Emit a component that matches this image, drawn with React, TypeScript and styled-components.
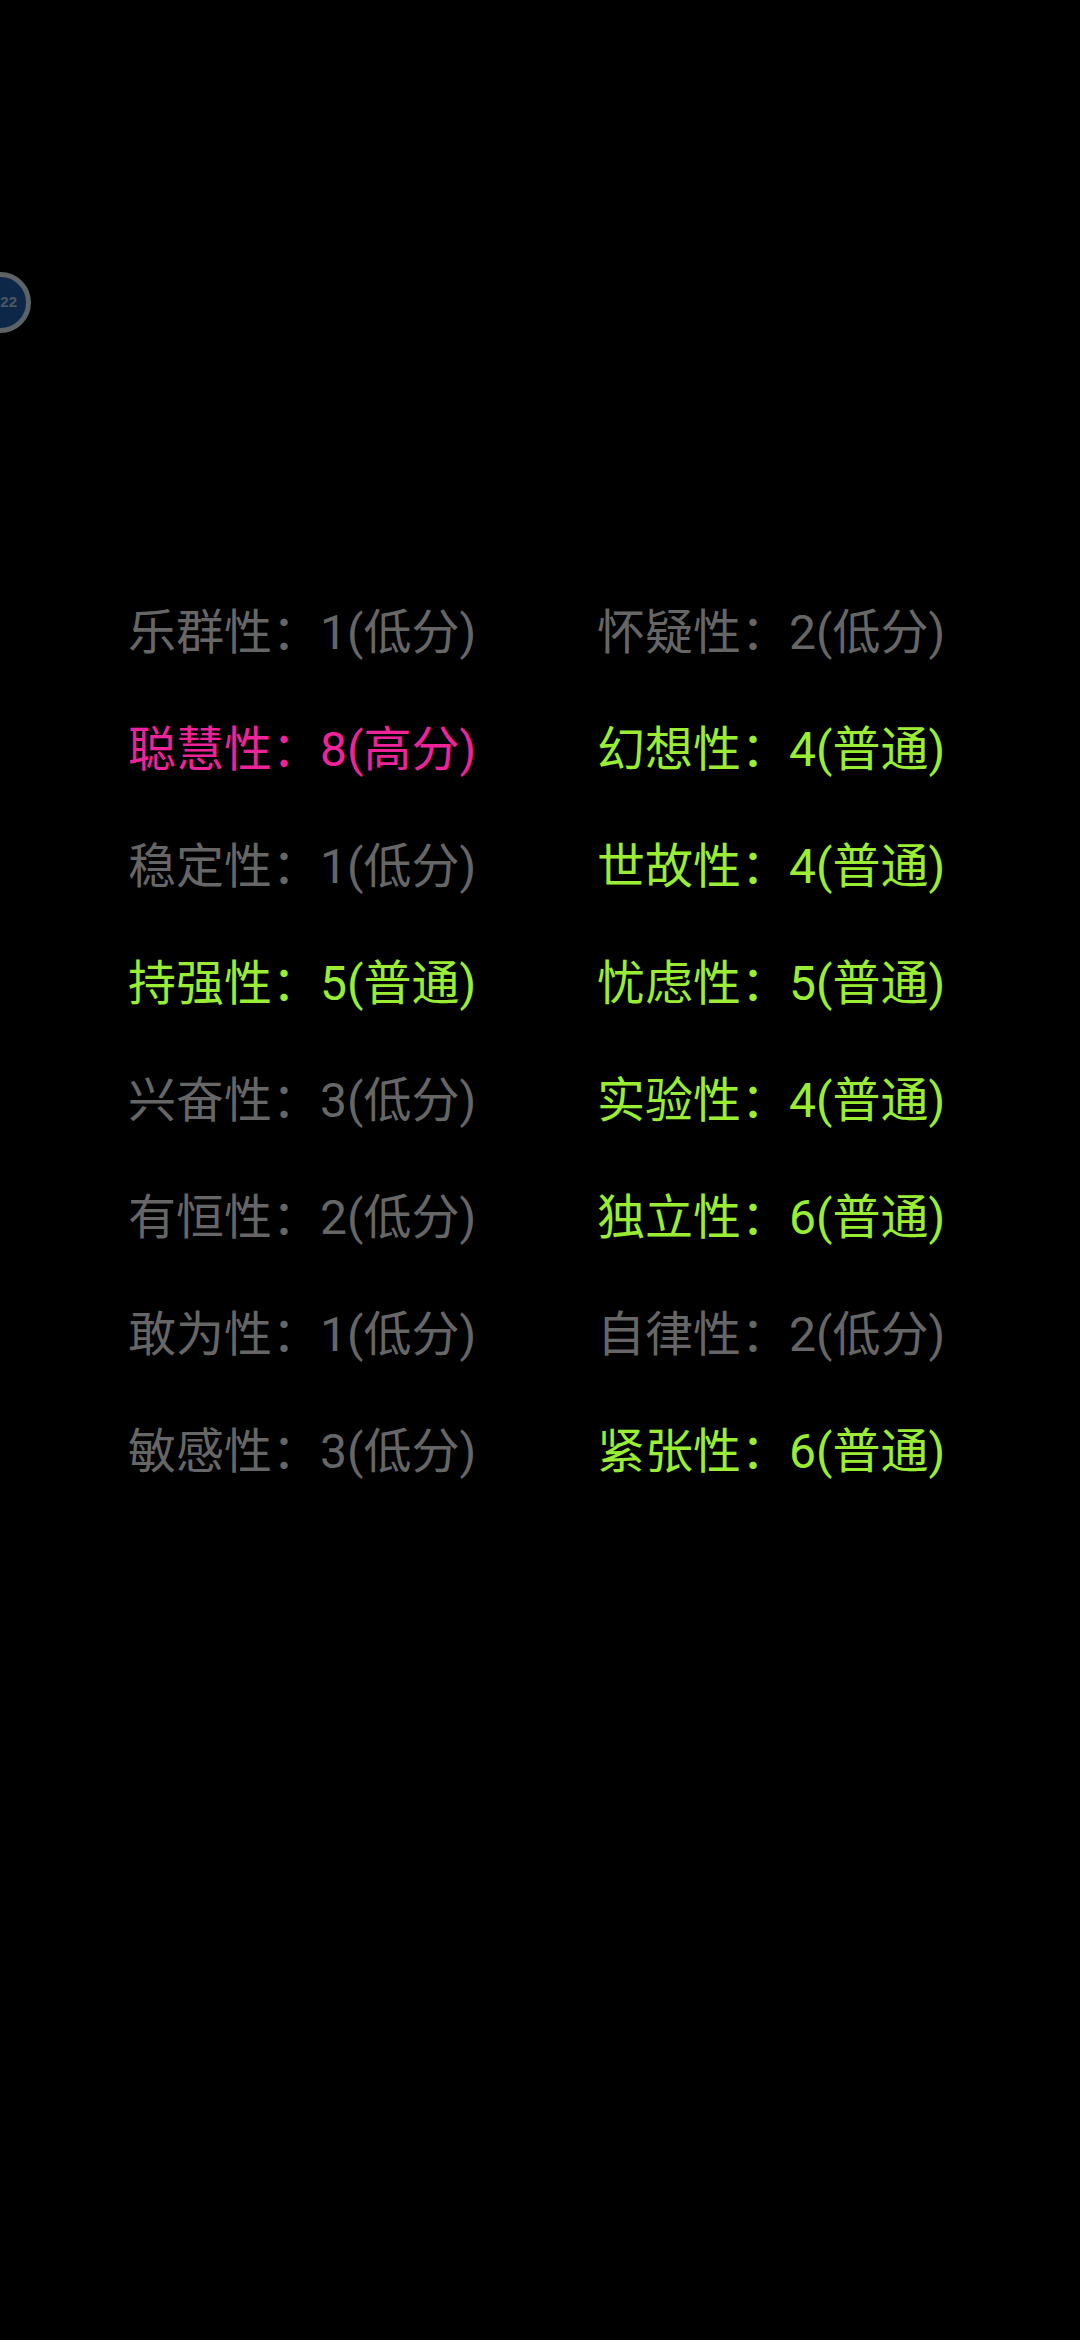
import * as React from 'react';
import styled, { createGlobalStyle } from 'styled-components';

type Level = 'low' | 'normal' | 'high';

const colors: Record<Level, string> = {
  low: '#666666',
  normal: '#99ee33',
  high: '#ee2299',
};

const GlobalStyle = createGlobalStyle`
  html, body {
    margin: 0;
    padding: 0;
    background: #000;
  }
`;

const Screen = styled.div`
  position: relative;
  width: 1080px;
  height: 2340px;
  background: #000;
  overflow: hidden;
  padding: 569px 0 0 128px;
  box-sizing: border-box;
`;

const Bubble = styled.div`
  position: absolute;
  left: -30px;
  top: 272px;
  width: 61px;
  height: 61px;
  box-sizing: border-box;
  border: 5px solid #5c6266;
  border-radius: 50%;
  background: #0c2748;
  display: flex;
  align-items: center;
  justify-content: flex-end;
  padding: 0 9px 2px 0;
  color: #4c5763;
  font: bold 15px 'Liberation Sans', sans-serif;
`;

const Grid = styled.div`
  display: grid;
  grid-template-columns: 469px 1fr;
  grid-auto-rows: 117px;
`;

const Item = styled.div<{ $level: Level }>`
  display: flex;
  align-items: center;
  height: 117px;
  white-space: nowrap;
  font-family: Roboto, 'Noto Sans CJK SC', sans-serif;
  font-size: 48px;
  color: ${(p) => colors[p.$level]};
`;

const COLON = '\uFF1A';

const items: [string, string, Level][] = [
  ['乐群性', '1(低分)', 'low'],
  ['怀疑性', '2(低分)', 'low'],
  ['聪慧性', '8(高分)', 'high'],
  ['幻想性', '4(普通)', 'normal'],
  ['稳定性', '1(低分)', 'low'],
  ['世故性', '4(普通)', 'normal'],
  ['持强性', '5(普通)', 'normal'],
  ['忧虑性', '5(普通)', 'normal'],
  ['兴奋性', '3(低分)', 'low'],
  ['实验性', '4(普通)', 'normal'],
  ['有恒性', '2(低分)', 'low'],
  ['独立性', '6(普通)', 'normal'],
  ['敢为性', '1(低分)', 'low'],
  ['自律性', '2(低分)', 'low'],
  ['敏感性', '3(低分)', 'low'],
  ['紧张性', '6(普通)', 'normal'],
];

export default function App() {
  return (
    <Screen>
      <GlobalStyle />
      <Bubble>22</Bubble>
      <Grid>
        {items.map(([name, score, level]) => (
          <Item key={name} $level={level}>
            {name + COLON + score}
          </Item>
        ))}
      </Grid>
    </Screen>
  );
}
